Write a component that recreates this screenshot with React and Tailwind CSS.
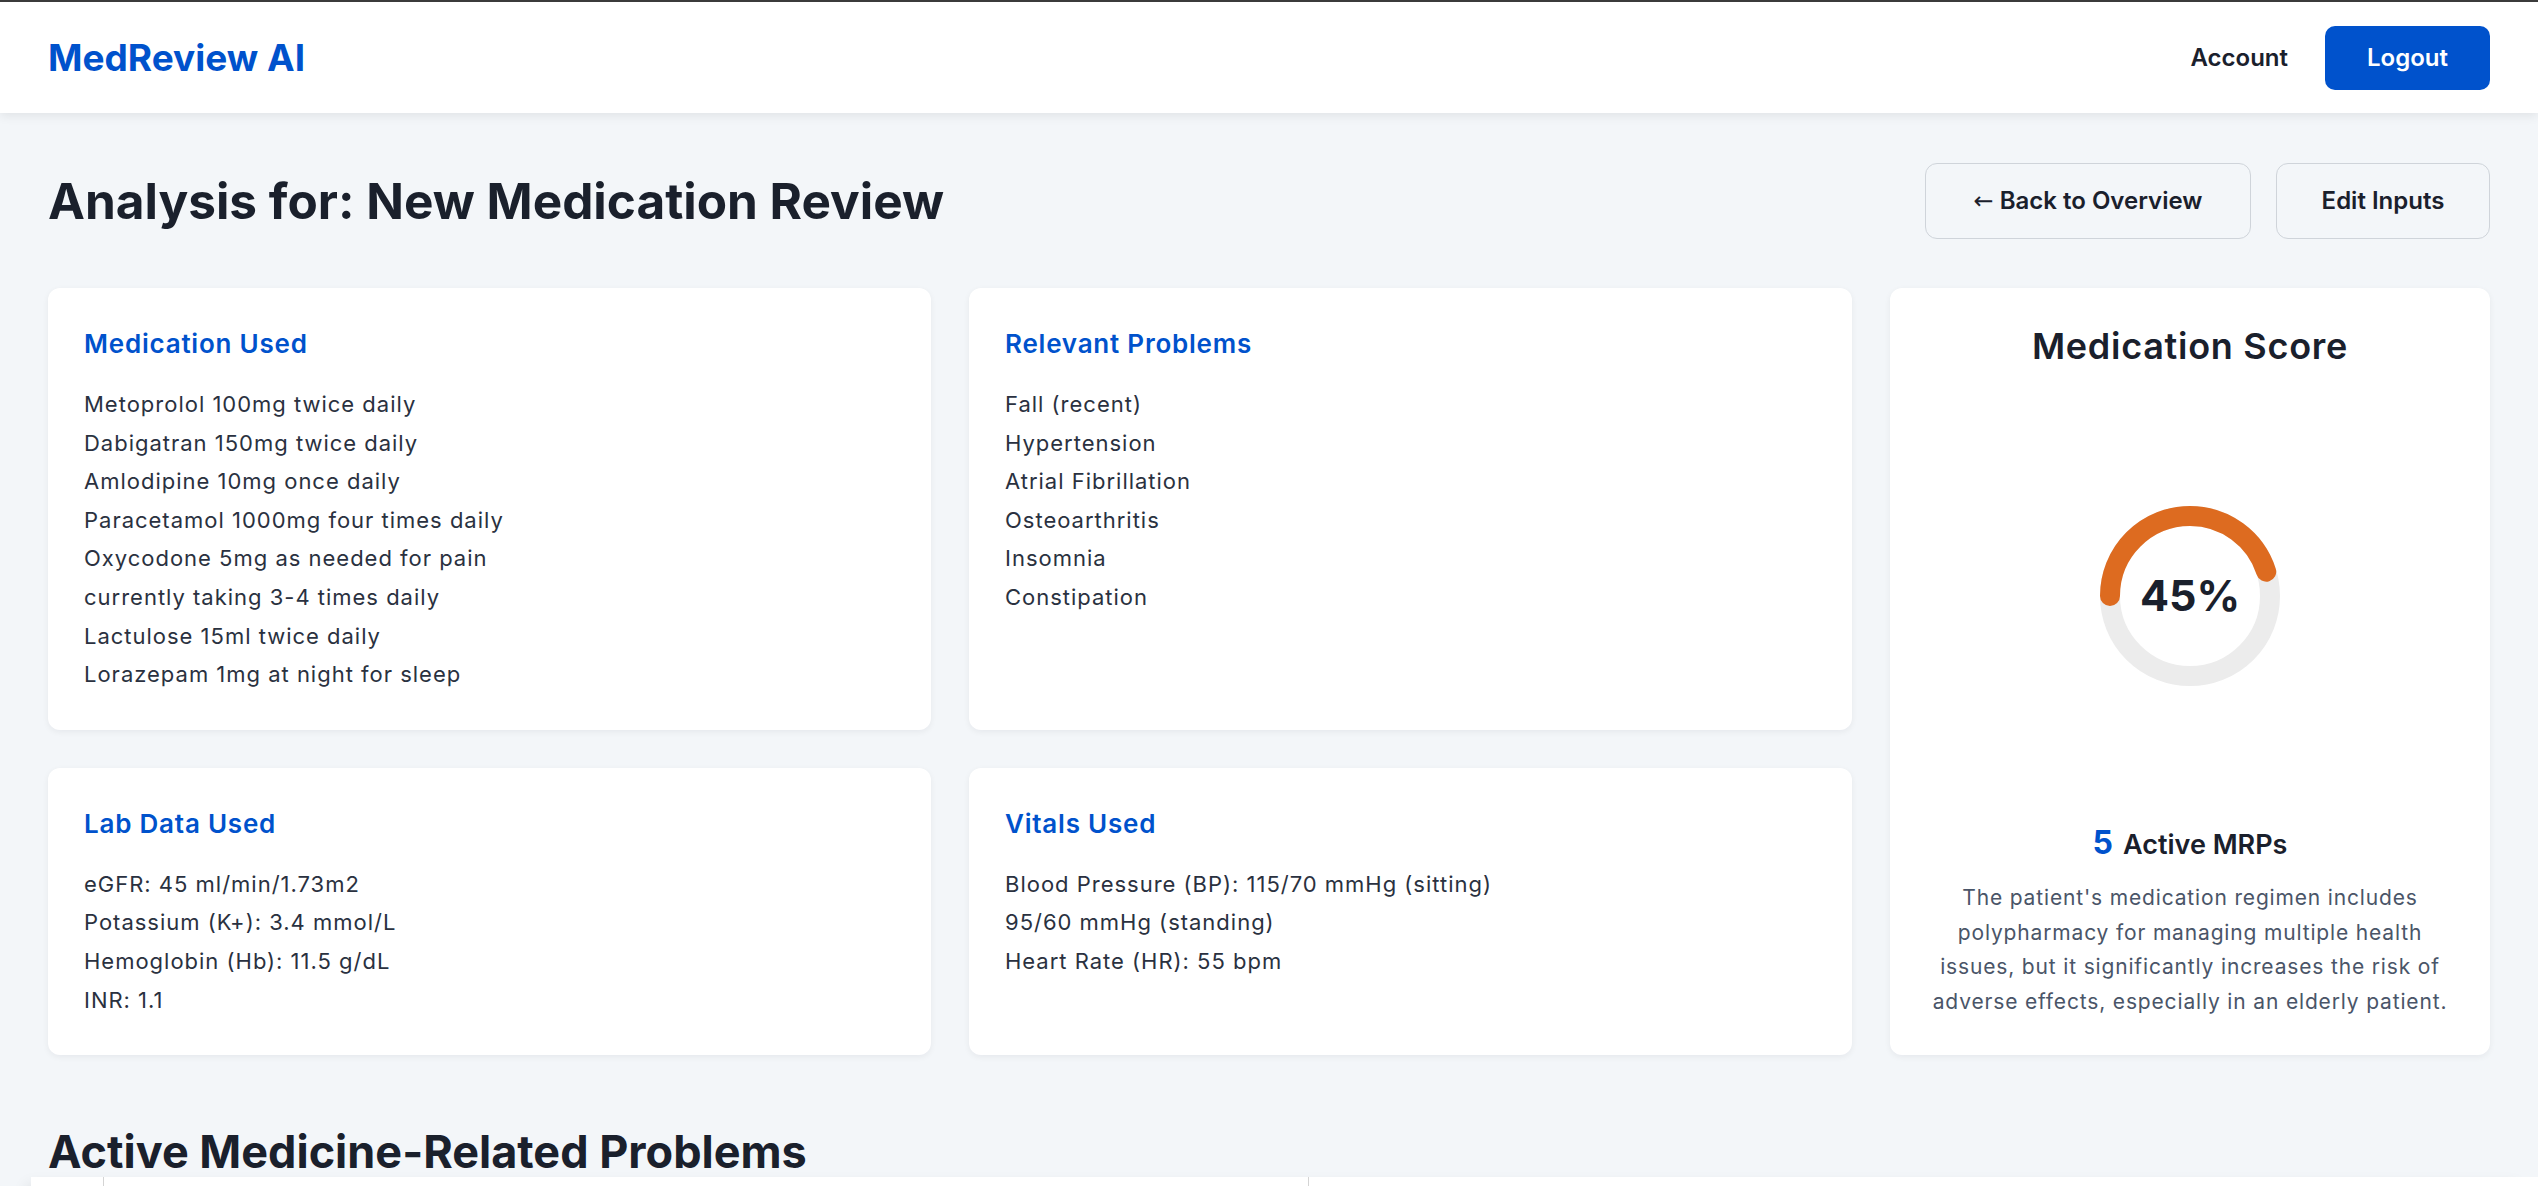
import React from 'react';

const medications = [
  'Metoprolol 100mg twice daily',
  'Dabigatran 150mg twice daily',
  'Amlodipine 10mg once daily',
  'Paracetamol 1000mg four times daily',
  'Oxycodone 5mg as needed for pain',
  'currently taking 3-4 times daily',
  'Lactulose 15ml twice daily',
  'Lorazepam 1mg at night for sleep',
];

const problems = ['Fall (recent)', 'Hypertension', 'Atrial Fibrillation', 'Osteoarthritis', 'Insomnia', 'Constipation'];

const labs = ['eGFR: 45 ml/min/1.73m2', 'Potassium (K+): 3.4 mmol/L', 'Hemoglobin (Hb): 11.5 g/dL', 'INR: 1.1'];

const vitals = ['Blood Pressure (BP): 115/70 mmHg (sitting)', '95/60 mmHg (standing)', 'Heart Rate (HR): 55 bpm'];

const InfoCard = ({ title, items }) => (
  <div className="bg-white rounded-xl shadow-[0_2px_6px_rgba(15,23,42,0.06)] px-9 pt-[38px] pb-9">
    <h3 className="text-[26px] leading-[36px] font-semibold tracking-[0.03em] text-[#0052cc]">{title}</h3>
    <ul className="mt-[23px]">
      {items.map((item) => (
        <li key={item} className="text-[22px] leading-[38.6px] tracking-[0.045em] text-[#2a3140]">
          {item}
        </li>
      ))}
    </ul>
  </div>
);

const ScoreRing = ({ value }) => {
  const r = 80;
  const c = 2 * Math.PI * r;
  return (
    <div className="relative w-[180px] h-[180px]">
      <svg width="180" height="180" viewBox="0 0 180 180">
        <circle cx="90" cy="90" r={r} fill="none" stroke="#ececec" strokeWidth="20" />
        <circle
          cx="90"
          cy="90"
          r={r}
          fill="none"
          stroke="#dd6b20"
          strokeWidth="20"
          strokeLinecap="round"
          strokeDasharray={`${(c * value) / 100} ${c}`}
          transform="rotate(180 90 90)"
        />
      </svg>
      <div className="absolute inset-0 flex items-center justify-center text-[43px] font-bold text-[#1a202c]">
        {value}%
      </div>
    </div>
  );
};

export default function App() {
  return (
    <div className="h-screen overflow-hidden flex flex-col bg-[#f3f6f9] font-['Inter',sans-serif] text-[#1a202c]">
      <header className="relative z-10 h-[113px] shrink-0 border-t-2 border-[#3b3b3b] bg-white shadow-[0_3px_10px_rgba(0,0,0,0.08)] px-12 flex items-center justify-between">
        <span className="text-[37px] font-bold text-[#0052cc]">MedReview AI</span>
        <nav className="flex items-center gap-[37px]">
          <a className="text-[24px] font-semibold text-[#1a202c]">Account</a>
          <button className="w-[165px] h-16 rounded-[10px] bg-[#0052cc] text-white text-[24px] font-semibold">Logout</button>
        </nav>
      </header>

      <main className="flex-1 overflow-hidden px-12 pt-[50px]">
        <div className="flex items-center justify-between mb-[49px]">
          <h1 className="text-[49.5px] leading-[60px] font-bold">Analysis for: New Medication Review</h1>
          <div className="flex gap-[25px]">
            <button className="w-[326px] h-[76px] rounded-xl border border-[#cfd4da] text-[24px] font-semibold">
              <span className="font-['DejaVu_Sans',sans-serif] font-normal">←</span> Back to Overview
            </button>
            <button className="w-[214px] h-[76px] rounded-xl border border-[#cfd4da] text-[24px] font-semibold">Edit Inputs</button>
          </div>
        </div>

        <div className="grid grid-cols-[1fr_1fr_600px] gap-[38px]">
          <InfoCard title="Medication Used" items={medications} />
          <InfoCard title="Relevant Problems" items={problems} />

          <div className="row-span-2 bg-white rounded-xl shadow-[0_2px_6px_rgba(15,23,42,0.06)] p-9 flex flex-col items-center text-center">
            <h2 className="text-[36px] leading-[44px] font-semibold tracking-[0.02em]">Medication Score</h2>
            <div className="flex-1 flex items-center justify-center">
              <ScoreRing value={45} />
            </div>
            <p className="leading-[40px] mb-[13px]">
              <span className="text-[32px] font-bold text-[#0052cc]">5</span>
              <span className="ml-[10px] text-[27px] font-semibold">Active MRPs</span>
            </p>
            <p className="text-[21px] leading-[34.5px] tracking-[0.04em] text-[#4a5568]">
              The patient's medication regimen includes
              <br />
              polypharmacy for managing multiple health
              <br />
              issues, but it significantly increases the risk of
              <br />
              adverse effects, especially in an elderly patient.
            </p>
          </div>

          <InfoCard title="Lab Data Used" items={labs} />
          <InfoCard title="Vitals Used" items={vitals} />
        </div>

        <h2 className="mt-[72px] text-[45px] leading-[50px] font-bold">Active Medicine-Related Problems</h2>
        <div className="-ml-[17px] -mr-12 bg-white shadow-[-12px_0_14px_-8px_rgba(0,0,0,0.1)]">
          <div className="grid grid-cols-[72px_1205px_1fr] h-16">
            <div />
            <div className="border-l border-[#d4d4d4]" />
            <div className="border-l border-[#d4d4d4]" />
          </div>
        </div>
      </main>
    </div>
  );
}
